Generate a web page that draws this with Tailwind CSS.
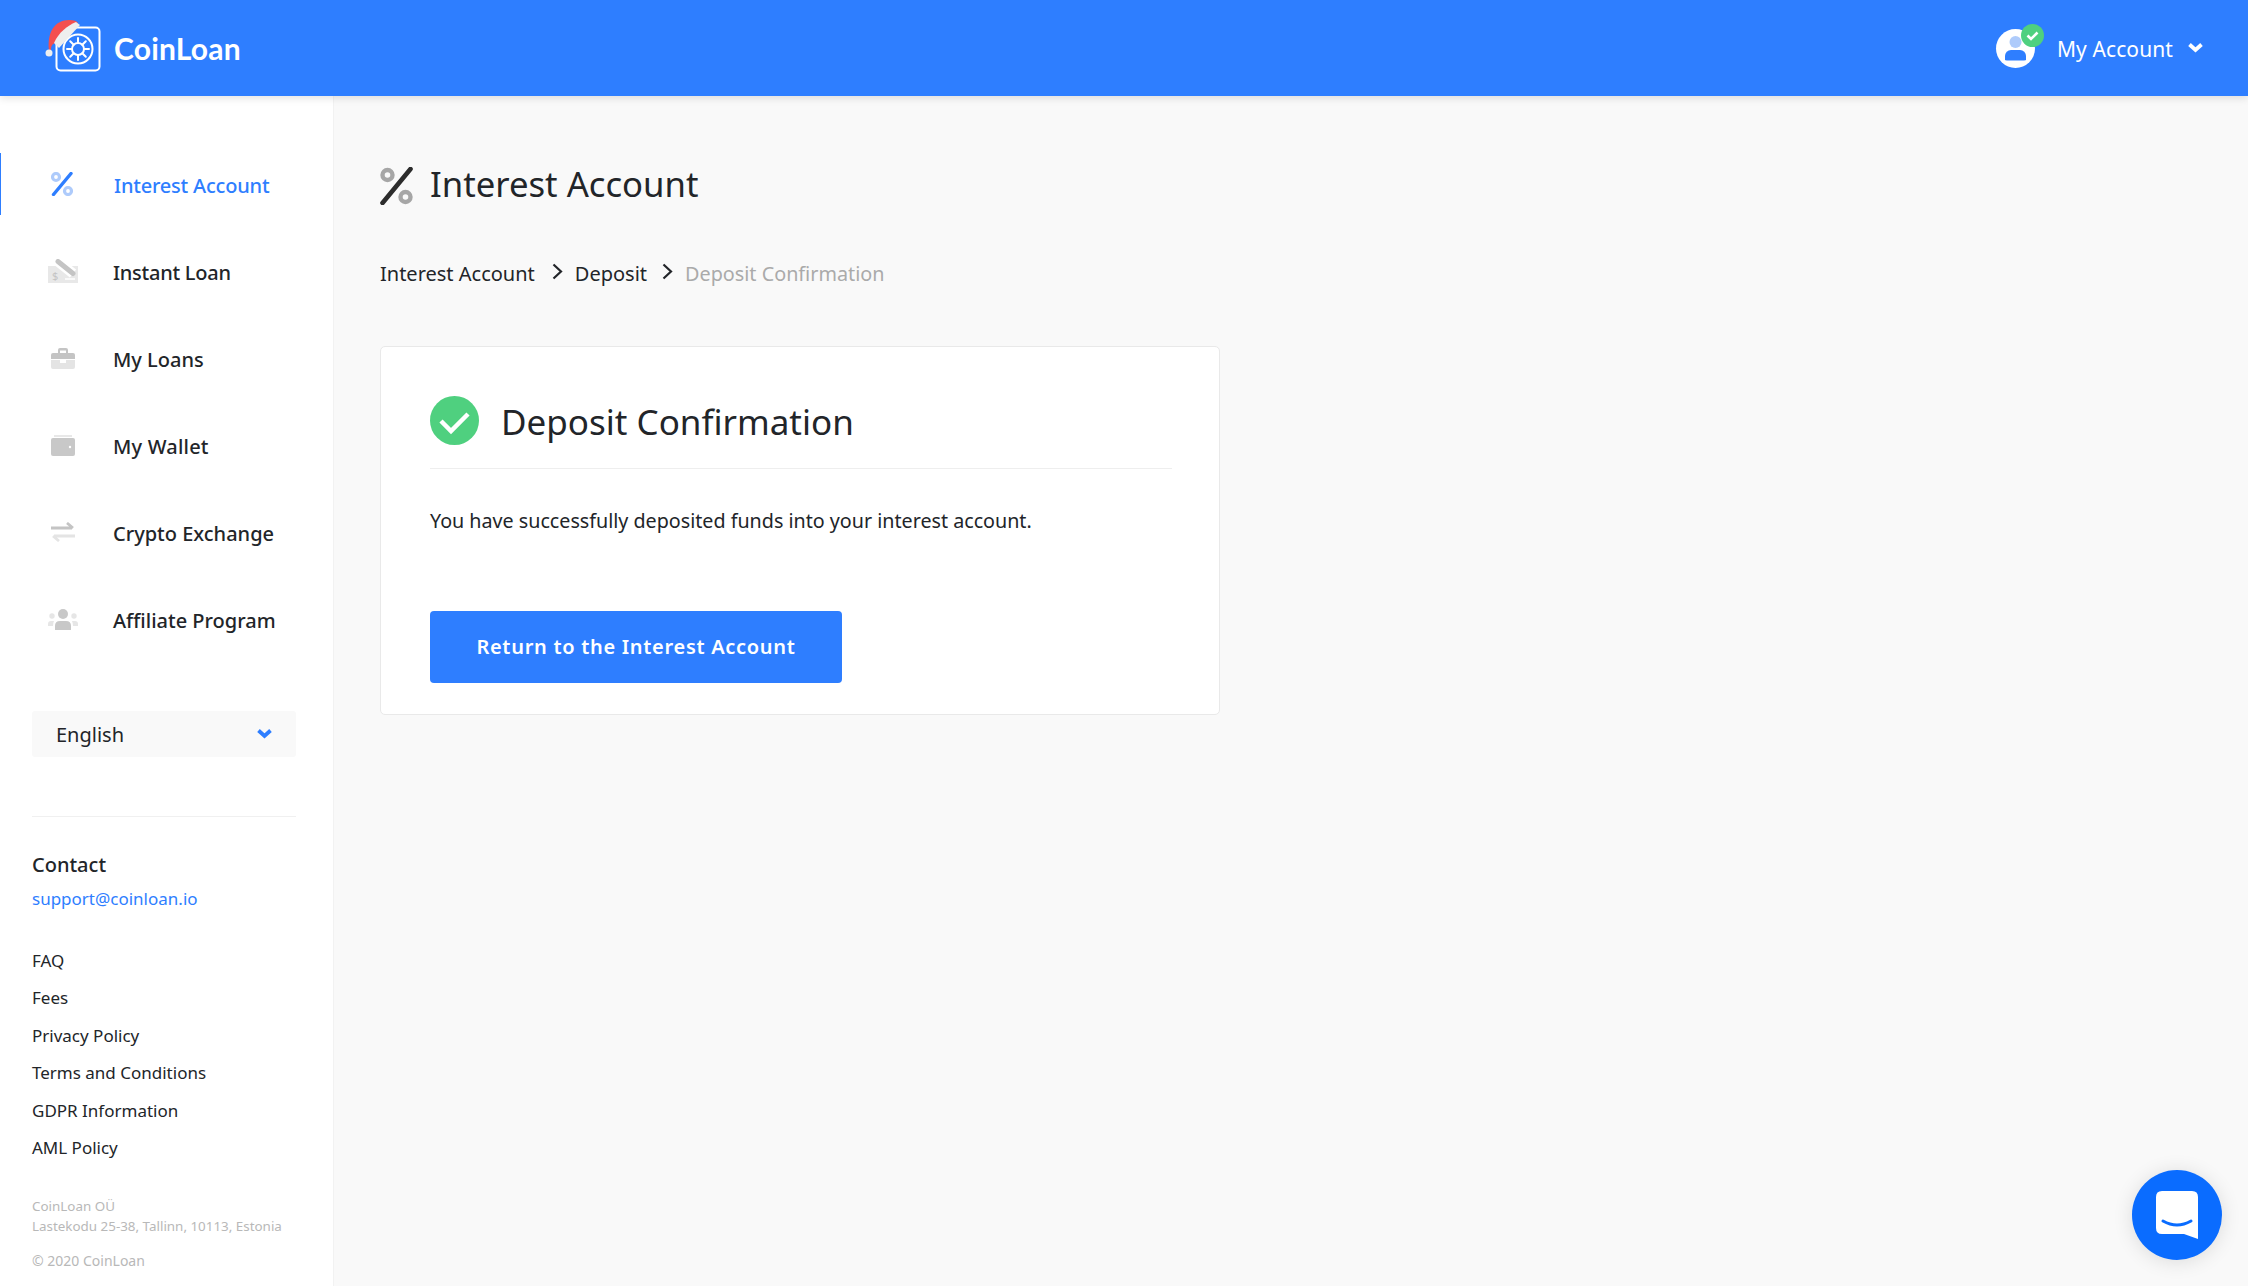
<!DOCTYPE html>
<html><head><meta charset="utf-8"><script src="https://cdn.jsdelivr.net/npm/@tailwindcss/browser@4"></script></head>
<body class="m-0 bg-[#f9f9f9] font-['Noto_Sans','Open_Sans',sans-serif] text-[#222529]">
<div class="relative h-[1286px] w-[2248px] overflow-hidden">
<header class="relative z-10 flex h-[96px] items-center justify-between bg-[#2e7eff] pl-[45px] pr-[45px] shadow-[0_2px_8px_rgba(0,0,0,0.12)]">
  <div class="flex items-center">
    <svg width="58" height="52" viewBox="0 0 58 52" class="mt-[-4px]">
      <rect x="11.5" y="7.5" width="43" height="43" rx="4" fill="none" stroke="#fff" stroke-width="2"/>
      <circle cx="33" cy="29" r="14.5" fill="none" stroke="#fff" stroke-width="2"/>
      <circle cx="33" cy="29" r="6" fill="none" stroke="#fff" stroke-width="2"/>
      <path d="M33 18v5M33 35v5M22 29h5M39 29h5M25.2 21.2l3.5 3.500M37.3 33.3l3.500 3.500M25.2 36.8l3.500-3.500M37.3 24.7l3.500-3.500" stroke="#fff" stroke-width="2" stroke-linecap="round"/>
      <path d="M4 30C2 12 10 0 24 0c5 0 8 1 9 3L14 24C9 22 6 24 6 30z" fill="#f44f4f"/>
      <path d="M31 2l4 3-21 23-5-5C14 12 22 6 31 2z" fill="#eeeeee"/>
      <circle cx="4" cy="33" r="3.500" fill="#eeeeee"/>
    </svg>
    <span class="ml-[11px] mt-[-1px] text-[30px] font-bold leading-none tracking-[0.2px] text-white font-['Lato',sans-serif]">CoinLoan</span>
  </div>
  <div class="flex items-center">
    <div class="relative mt-[1px] size-[39px] rounded-full bg-white">
      <svg class="absolute left-0 top-0" width="39" height="39" viewBox="0 0 39 39"><circle cx="19.500" cy="13" r="6" fill="#aecbfb"/><path d="M9 31v-4a6 6 0 0 1 6-6h9a6 6 0 0 1 6 6v4q0 0-2 .5H11q-2-.5-2-.5z" fill="#2e7eff"/></svg>
      <svg class="absolute left-[25px] top-[-5px]" width="23" height="23" viewBox="0 0 23 23"><circle cx="11.500" cy="11.500" r="11.500" fill="#4fd07f"/><path d="M6.500 11.500l3.500 3.500 6.500-6.500" fill="none" stroke="#fff" stroke-width="2.600"/></svg>
    </div>
    <span class="ml-[22px] mt-[2px] text-[21px] leading-none tracking-[0.1px] text-white">My Account</span>
    <svg class="ml-[15px] mb-[1px]" width="15" height="11" viewBox="0 0 15 11"><path d="M1.500 2.500l6 5.500 6-5.500" fill="none" stroke="#fff" stroke-width="3.800"/></svg>
  </div>
</header>
<div class="flex h-[1190px]">
<aside class="w-[334px] shrink-0 border-r border-[#f2f2f2] bg-white">
  <nav class="pt-[57px]">
    <a class="flex h-[62px] items-center border-l border-[#2e7eff] pl-[50px] text-[#2e7eff]">
      <svg width="22" height="24" viewBox="0 0 22 24"><circle cx="5" cy="5" r="3.500" fill="none" stroke="#aecbfb" stroke-width="3.200"/><circle cx="17" cy="19" r="3.500" fill="none" stroke="#aecbfb" stroke-width="3.200"/><path d="M20 1.500L2.500 22.500" stroke="#2e7eff" stroke-width="3.400" stroke-linecap="round"/></svg>
      <span class="ml-[41px] mt-[3px] text-[20px] font-medium leading-none tracking-[-0.2px]">Interest Account</span>
    </a>
    <a class="mt-[25px] flex h-[62px] items-center pl-[48px]">
      <svg width="30" height="24" viewBox="0 0 30 24"><path d="M0 7h30v17H0z" fill="#e8e8e8"/><path d="M10 2.500L25 14.500" stroke="#fff" stroke-width="10"/><path d="M10 2.500L25 14.500" stroke="#c4c4c4" stroke-width="5" stroke-linecap="round"/><path d="M17 20h10" stroke="#fff" stroke-width="1.500"/><text x="4" y="21" font-size="11" fill="#c4c4c4" font-family="Noto Sans">$</text></svg>
      <span class="ml-[35px] mt-[3px] text-[20px] font-medium leading-none tracking-[-0.25px]">Instant Loan</span>
    </a>
    <a class="mt-[25px] flex h-[62px] items-center pl-[51px]">
      <svg width="24" height="21" viewBox="0 0 24 21"><path d="M7 5V2q0-2 2-2h6q2 0 2 2v3h-2V2.500H9V5z" fill="#c4c4c4"/><path d="M2 5h20q2 0 2 2v4H0V7q0-2 2-2z" fill="#c4c4c4"/><path d="M0 12h9v3h6v-3h9v7q0 2-2 2H2q-2 0-2-2z" fill="#e4e4e4"/></svg>
      <span class="ml-[38px] mt-[3px] text-[20px] font-medium leading-none">My Loans</span>
    </a>
    <a class="mt-[25px] flex h-[62px] items-center pl-[51px]">
      <svg width="24" height="21" viewBox="0 0 24 21"><path d="M3 0h18v2H3z" fill="#e8e8e8"/><path d="M2 3h20q2 0 2 2v14q0 2-2 2H2q-2 0-2-2V5q0-2 2-2z" fill="#c8c8c8"/><circle cx="19" cy="12" r="1.200" fill="#fff"/></svg>
      <span class="ml-[38px] mt-[3px] text-[20px] font-medium leading-none tracking-[0.2px]">My Wallet</span>
    </a>
    <a class="mt-[25px] flex h-[62px] items-center pl-[51px]">
      <svg width="24" height="20" viewBox="0 0 24 20"><path d="M0 6h21M16 1l6 5" fill="none" stroke="#c4c4c4" stroke-width="2.800"/><path d="M24 14H3M8 19l-6-5" fill="none" stroke="#e4e4e4" stroke-width="2.800"/></svg>
      <span class="ml-[38px] mt-[3px] text-[20px] font-medium leading-none">Crypto Exchange</span>
    </a>
    <a class="mt-[25px] flex h-[62px] items-center pl-[48px]">
      <svg width="30" height="21" viewBox="0 0 30 21"><circle cx="15" cy="5" r="5" fill="#c8c8c8"/><path d="M7 21v-4q0-5 5-5h6q5 0 5 5v4z" fill="#c8c8c8"/><circle cx="4" cy="7" r="2.700" fill="#e6e6e6"/><circle cx="26" cy="7" r="2.700" fill="#e6e6e6"/><path d="M0 15q0-3 3-3h3q-1 2-1 5H0zM30 15q0-3-3-3h-3q1 2 1 5h5z" fill="#e6e6e6"/></svg>
      <span class="ml-[35px] mt-[3px] text-[20px] font-medium leading-none">Affiliate Program</span>
    </a>
  </nav>
  <div class="mx-[32px] mt-[61px] flex h-[46px] w-[264px] items-center justify-between rounded-[3px] bg-[#f9f9f9] pl-[24px] pr-[24px] text-[20px]">
    <span class="mt-[2px]">English</span>
    <svg class="mb-[2px]" width="15" height="11" viewBox="0 0 15 11"><path d="M1.500 2.500l6 5.500 6-5.500" fill="none" stroke="#2e7eff" stroke-width="3.800"/></svg>
  </div>
  <div class="mx-[32px] mt-[59px] h-px w-[264px] bg-[#f0f0f0]"></div>
  <div class="ml-[32px] mt-[34px] text-[20px] font-medium leading-[28px]">Contact</div>
  <a class="ml-[32px] mt-[8px] block text-[17px] leading-[24px] text-[#2e7eff]">support@coinloan.io</a>
  <ul class="ml-[32px] mt-[38px] text-[17px] leading-[24px]">
    <li class="h-[37.400px]">FAQ</li>
    <li class="h-[37.400px]">Fees</li>
    <li class="h-[37.400px]">Privacy Policy</li>
    <li class="h-[37.400px]">Terms and Conditions</li>
    <li class="h-[37.400px]">GDPR Information</li>
    <li class="h-[37.400px]">AML Policy</li>
  </ul>
  <p class="ml-[32px] mt-[23px] text-[13.400px] leading-[20px] text-[#b8b8b8]">CoinLoan OÜ<br>Lastekodu 25-38, Tallinn, 10113, Estonia</p>
  <p class="ml-[32px] mt-[15px] text-[14px] leading-[20px] text-[#b8b8b8]">© 2020 CoinLoan</p>
</aside>
<main class="flex-1 pl-[46px] pt-[65px]">
  <div class="flex h-[50px] items-center">
    <svg width="33" height="38" viewBox="0 0 33 38"><circle cx="7.500" cy="8" r="5" fill="none" stroke="#a6a6a6" stroke-width="4.400"/><circle cx="25.500" cy="30" r="5" fill="none" stroke="#a6a6a6" stroke-width="4.400"/><path d="M30.500 2L2.500 36" stroke="#2c2c2c" stroke-width="4.600" stroke-linecap="round"/></svg>
    <h1 class="ml-[17px] mt-[-3px] text-[34.700px] font-normal leading-none">Interest Account</h1>
  </div>
  <div class="mt-[47px] flex h-[32px] items-center text-[20px] leading-none">
    <span>Interest Account</span>
    <svg class="mb-[6px] ml-[17px]" width="11" height="17" viewBox="0 0 11 17"><path d="M1.500 1.500l7.500 7-7.500 7" fill="none" stroke="#222529" stroke-width="2.200"/></svg>
    <span class="ml-[12px]">Deposit</span>
    <svg class="mb-[6px] ml-[15px]" width="11" height="17" viewBox="0 0 11 17"><path d="M1.500 1.500l7.500 7-7.500 7" fill="none" stroke="#222529" stroke-width="2.200"/></svg>
    <span class="ml-[12px] text-[19.800px] text-[#aaaaaa]">Deposit Confirmation</span>
  </div>
  <section class="mt-[56px] h-[369px] w-[840px] rounded-[5px] border border-[#e9e9e9] bg-white pl-[49px] pr-[47px] pt-[49px]">
    <div class="flex h-[73px] items-start border-b border-[#eeeeee]">
      <svg width="49" height="49" viewBox="0 0 49 49"><circle cx="24.500" cy="24.500" r="24.500" fill="#4fd07f"/><path d="M11 25l10 10 17-17" fill="none" stroke="#fff" stroke-width="4.500"/></svg>
      <h2 class="ml-[22px] mt-[2px] text-[35px] font-normal leading-[48px]">Deposit Confirmation</h2>
    </div>
    <p class="mt-[37px] text-[19.700px] leading-[30px]">You have successfully deposited funds into your interest account.</p>
    <button class="mt-[75px] flex h-[72px] w-[412px] items-center justify-center rounded-[4px] bg-[#2e7eff] text-[20px] font-semibold tracking-[0.7px] text-white">Return to the Interest Account</button>
  </section>
</main>
</div>
<div class="absolute left-[2132px] top-[1170px] flex size-[90px] items-center justify-center rounded-full bg-[#0a6cff] shadow-[0_2px_20px_rgba(0,0,0,0.12)]">
  <svg width="42" height="48" viewBox="0 0 42 48"><path d="M6 0h30q6 0 6 6v42l-14-5H6q-6 0-6-6V6q0-6 6-6z" fill="#fff"/><path d="M7 30q14 8 28 0" fill="none" stroke="#0a6cff" stroke-width="3" stroke-linecap="round"/></svg>
</div>
</div>
</body></html>
